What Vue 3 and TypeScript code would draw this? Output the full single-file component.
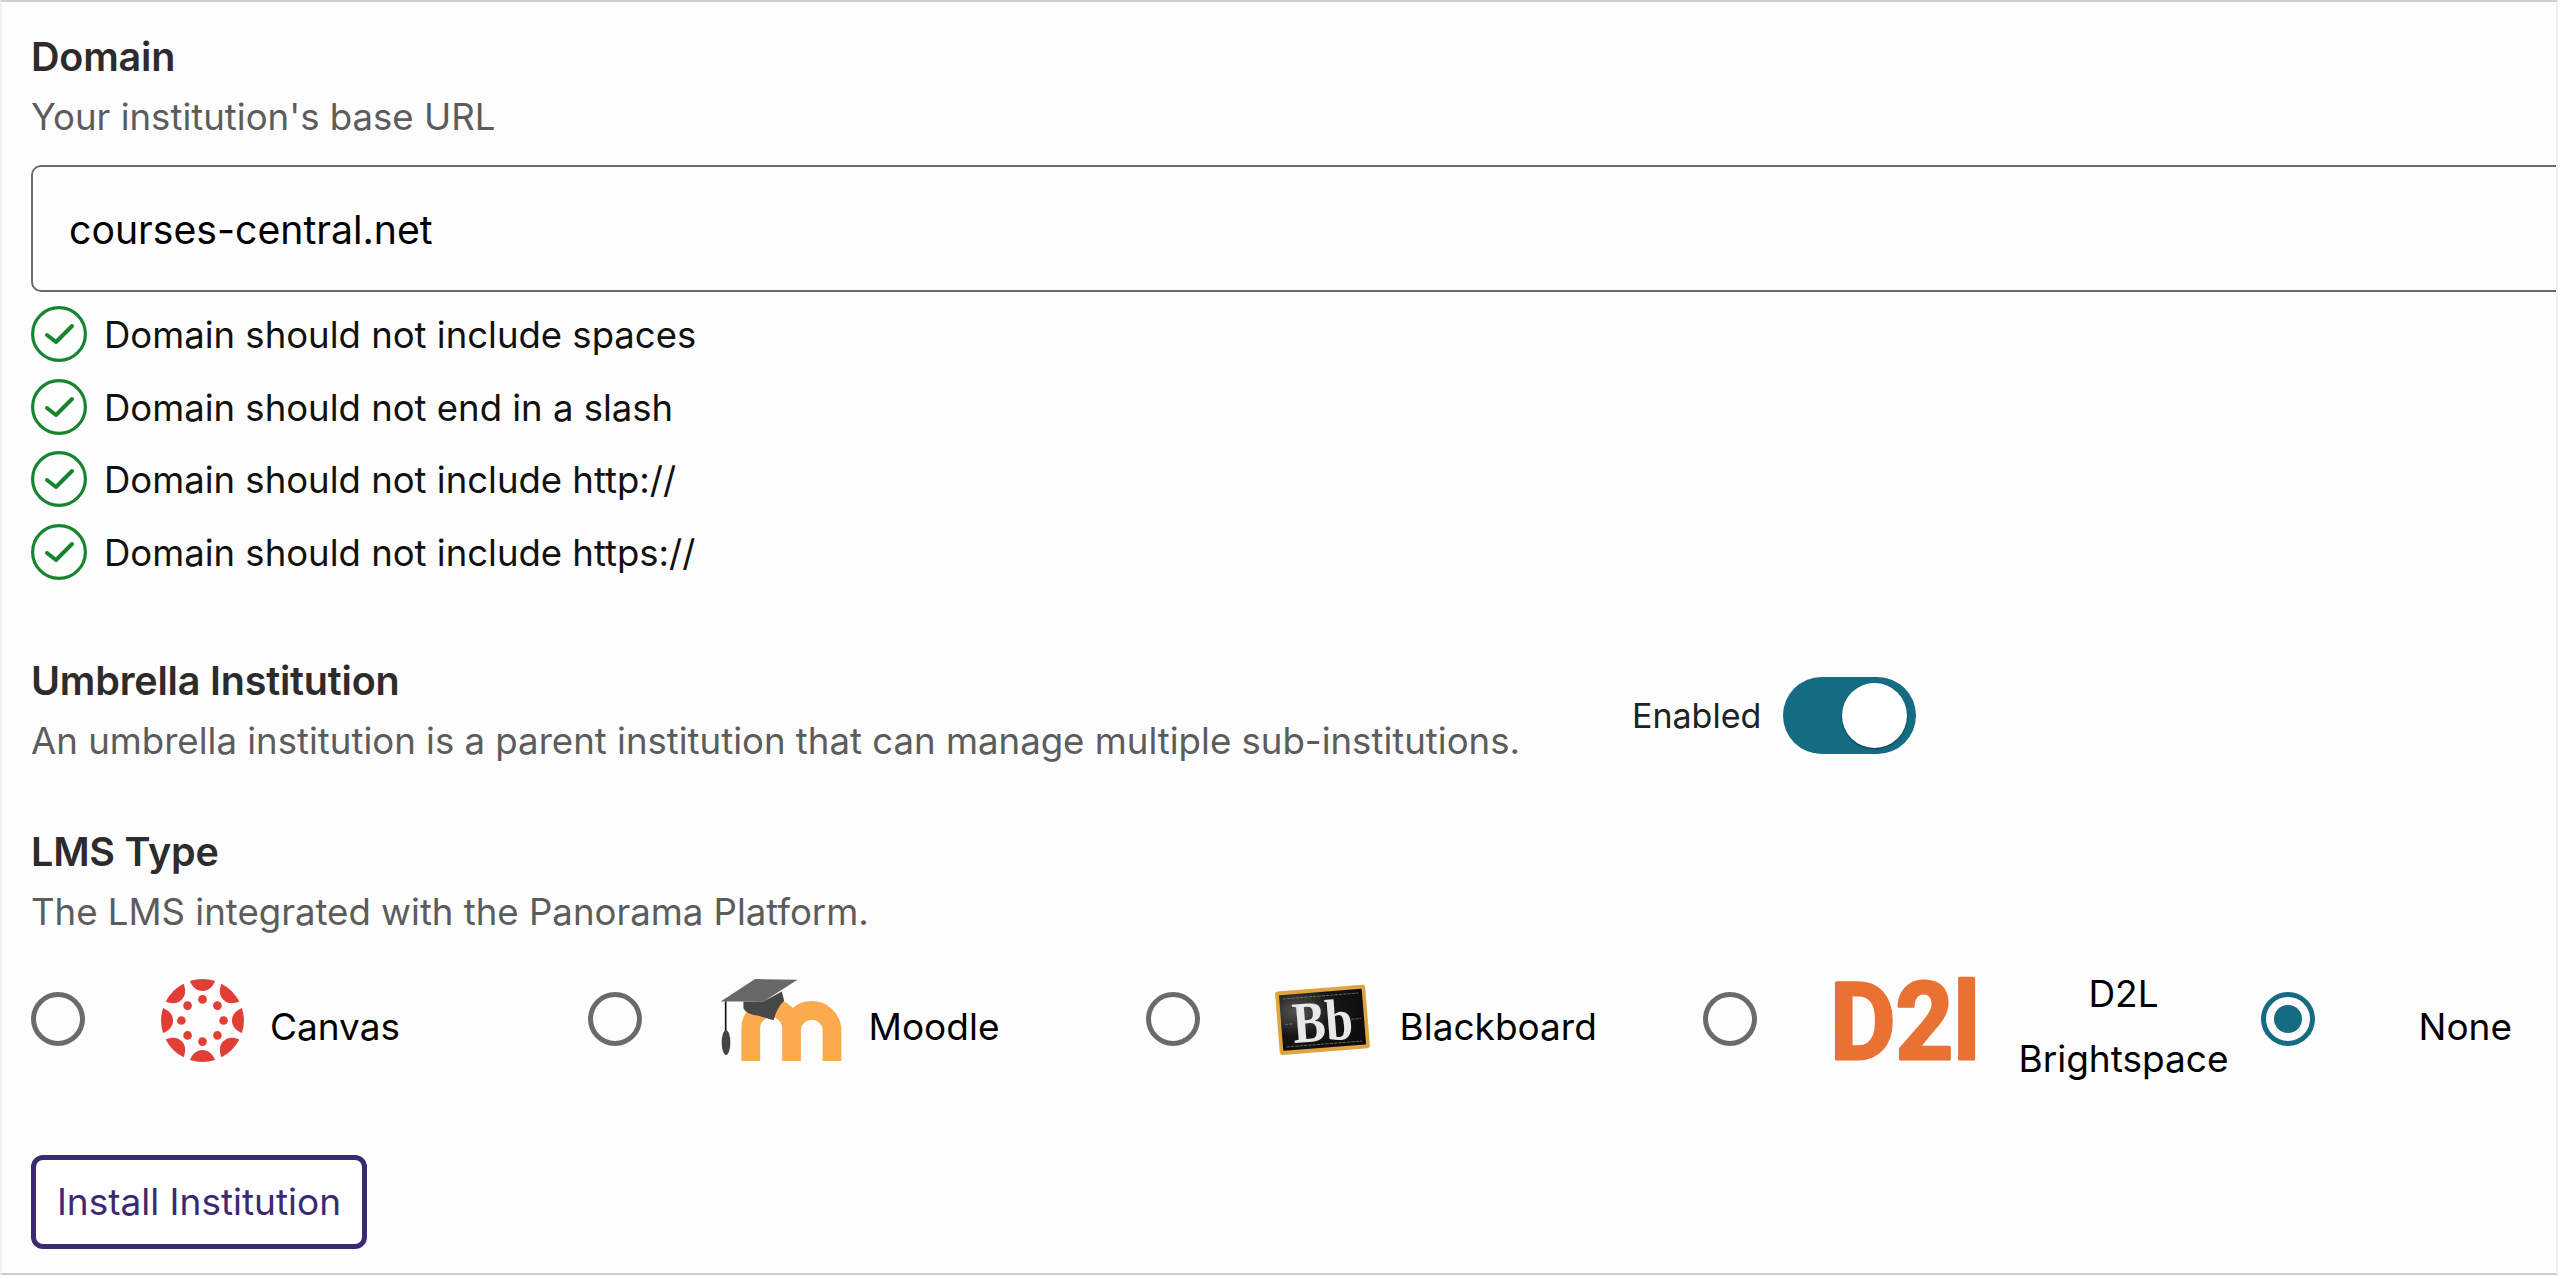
<script setup lang="ts">
const rules: string[] = [
  'Domain should not include spaces',
  'Domain should not end in a slash',
  'Domain should not include http://',
  'Domain should not include https://',
]
const wedges: number[] = [0, 45, 90, 135, 180, 225, 270, 315]
</script>

<template>
  <main class="card">
    <section class="domain">
      <h2 class="title">Domain</h2>
      <p class="desc">Your institution's base URL</p>
      <div class="input">courses-central.net</div>
      <ul class="rules">
        <li v-for="r in rules" :key="r" class="rule">
          <svg class="check" viewBox="0 0 56 56" fill="none">
            <circle cx="28" cy="28" r="26.4" stroke="#178530" stroke-width="3.2" />
            <path d="M16 29 L25 36 L41 20" stroke="#178530" stroke-width="4" stroke-linecap="round" stroke-linejoin="round" />
          </svg>
          <span class="rule-text">{{ r }}</span>
        </li>
      </ul>
    </section>

    <section class="umbrella">
      <div class="umbrella-text">
        <h2 class="title">Umbrella Institution</h2>
        <p class="desc">An umbrella institution is a parent institution that can manage multiple sub-institutions.</p>
      </div>
      <div class="toggle-wrap">
        <span class="toggle-label">Enabled</span>
        <span class="toggle"><span class="knob"></span></span>
      </div>
    </section>

    <section class="lms">
      <h2 class="title">LMS Type</h2>
      <p class="desc">The LMS integrated with the Panorama Platform.</p>
      <div class="options">
        <div class="option opt-canvas">
          <span class="radio"></span>
          <svg class="logo canvas-logo" viewBox="0 0 100 100">
            <g fill="#e13e36">
              <path v-for="a in wedges" :key="a" :transform="`rotate(${a} 50 50)`"
                d="M34.8 2.5 A50 50 0 0 1 65.2 2.5 C62 10 57 14.5 50 14.5 C43 14.5 38 10 34.8 2.5 Z" />
              <circle v-for="a in wedges" :key="'d' + a" :transform="`rotate(${a} 50 50)`" cx="50" cy="24.6" r="5.2" />
            </g>
          </svg>
          <span class="label">Canvas</span>
        </div>

        <div class="option opt-moodle">
          <span class="radio"></span>
          <svg class="logo moodle-logo" viewBox="480 85 365 248">
            <path d="M572 330 V232 A61 61 0 0 1 694 232 V330 M694 232 A61 61 0 0 1 815 232 V330" fill="none" stroke="#fbaa4e" stroke-width="56" />
            <path d="M550 152 L610 152 L665 122 L672 150 Q652 168 640 208 L595 195 Q558 190 550 172 Z" fill="#474747" />
            <path d="M482 152 L585 85 L712 87 L610 152 Z" fill="#686868" />
            <path d="M497 152 V245" stroke="#111" stroke-width="5" />
            <ellipse cx="498" cy="275" rx="13" ry="37" fill="#444" />
          </svg>
          <span class="label">Moodle</span>
        </div>

        <div class="option opt-bb">
          <span class="radio"></span>
          <svg class="logo bb-logo" viewBox="520 97 292 218">
            <defs>
              <radialGradient id="bbg" cx="0.2" cy="0.3" r="0.9">
                <stop offset="0" stop-color="#555" />
                <stop offset="0.5" stop-color="#151515" />
                <stop offset="1" stop-color="#0c0c0c" />
              </radialGradient>
            </defs>
            <g transform="rotate(-4.5 666 207)">
              <rect x="530" y="111" width="272" height="192" rx="8" fill="#dfa440" />
              <rect x="541" y="123" width="250" height="168" rx="3" fill="url(#bbg)" />
              <path d="M552 212 H578 M752 212 H782 M552 280 H780 M552 135 H780" stroke="#999" stroke-width="2.5" stroke-dasharray="10 3" opacity=".7" />
              <text x="666" y="270" class="bb-text" text-anchor="middle" textLength="182" lengthAdjust="spacingAndGlyphs">Bb</text>
            </g>
          </svg>
          <span class="label">Blackboard</span>
        </div>

        <div class="option opt-d2l">
          <span class="radio"></span>
          <svg class="logo d2l-logo" viewBox="0 0 143 81">
            <text x="-5" y="79" class="d2l-text" textLength="150" lengthAdjust="spacingAndGlyphs">D2l</text>
          </svg>
          <span class="label multi">D2L Brightspace</span>
        </div>

        <div class="option opt-none">
          <span class="radio on"><span class="dot"></span></span>
          <span class="label">None</span>
        </div>
      </div>
    </section>

    <button class="install" type="button">Install Institution</button>
  </main>
</template>

<style>
html, body { margin: 0; background: #fff; }
</style>

<style scoped>
.card {
  box-sizing: border-box;
  width: 2558px;
  height: 1275px;
  border-top: 2px solid #cfcfcf;
  border-bottom: 2px solid #cfcfcf;
  border-left: 2px solid #f0f0f0;
  border-right: 2px solid #f0f0f0;
  background: #fdfdfd;
  padding: 32px 0 0 29px;
  font-family: Inter, "Liberation Sans", sans-serif;
  color: #000;
}
.title {
  margin: 0;
  font-size: 39.5px;
  line-height: 46px;
  font-weight: 600;
  color: #2d2b2b;
  letter-spacing: -0.2px;
}
.desc {
  margin: 14px 0 0;
  font-size: 36.6px;
  line-height: 46px;
  color: #5c5c5c;
}
.input {
  box-sizing: border-box;
  display: flex;
  align-items: center;
  height: 127px;
  margin-top: 25px;
  padding-left: 36px;
  padding-top: 2px;
  border: 2.5px solid #6b6b6b;
  border-right: none;
  border-radius: 10px 0 0 10px;
  font-size: 39.2px;
  color: #000;
}
.rules {
  list-style: none;
  margin: 14px 0 0;
  padding: 0;
  display: flex;
  flex-direction: column;
  gap: 16.7px;
}
.rule {
  display: flex;
  align-items: center;
  gap: 17px;
  height: 56px;
  font-size: 36.5px;
  color: #111;
}
.rule-text { padding-top: 2px; }
.check { width: 56px; height: 56px; flex: none; }
.umbrella {
  display: flex;
  margin-top: 78px;
}
.umbrella-text { width: 1601px; flex: none; }
.toggle-wrap {
  display: flex;
  align-items: center;
  gap: 22px;
  height: 77px;
  margin-top: 19px;
}
.toggle-label { font-size: 34px; color: #222; }
.toggle {
  box-sizing: border-box;
  width: 133px;
  height: 77px;
  border-radius: 39px;
  background: #156b82;
  display: flex;
  align-items: center;
  justify-content: flex-end;
  padding-right: 9px;
}
.knob {
  width: 65px;
  height: 65px;
  border-radius: 50%;
  background: #fff;
  box-shadow: 0 1px 2px rgba(0, 0, 30, .5);
}
.lms { margin-top: 65px; }
.options {
  display: flex;
  align-items: center;
  height: 104px;
  margin-top: 40px;
  font-size: 37px;
}
.option {
  display: flex;
  align-items: center;
  flex: none;
  height: 104px;
  position: relative;
}
.radio {
  box-sizing: border-box;
  flex: none;
  width: 54px;
  height: 54px;
  border: 5px solid #6a6a6a;
  border-radius: 50%;
  margin-top: -16px;
  display: flex;
  align-items: center;
  justify-content: center;
}
.radio.on { border-color: #156b82; }
.dot { width: 28px; height: 28px; border-radius: 50%; background: #156b82; }
.logo { flex: none; }
.label { flex: none; margin-top: -2px; }
.opt-canvas { width: 556.5px; }
.opt-moodle { width: 558px; }
.opt-bb { width: 557px; }
.opt-d2l { width: 558px; }
.canvas-logo { width: 83px; height: 83px; margin-left: 76px; margin-right: 26px; margin-top: -14px; }
.moodle-logo { width: 122px; height: 83px; margin-left: 78px; margin-right: 27px; margin-top: -14px; }
.bb-logo { width: 97px; height: 73px; margin-left: 74px; margin-right: 29px; margin-top: -16px; }
.d2l-logo { width: 143px; height: 81px; margin-left: 78px; margin-right: 40px; margin-top: -14px; overflow: visible; }
.opt-none .label { margin-left: 104px; }
.multi { width: 212px; text-align: center; line-height: 65px; }
.bb-text {
  font-family: "Liberation Serif", serif;
  font-size: 176px;
  font-weight: 700;
  fill: #e8e8e8;
}
.d2l-text {
  font-family: Roboto, sans-serif;
  font-size: 108px;
  font-weight: 700;
  fill: #e97132;
  stroke: #e97132;
  stroke-width: 3px;
  stroke-linejoin: round;
}
.install {
  display: block;
  box-sizing: border-box;
  width: 336px;
  height: 94px;
  margin-top: 76px;
  padding: 0 0 2px;
  background: #fff;
  border: 5px solid #3c2a70;
  border-radius: 12px;
  font-family: inherit;
  font-size: 37px;
  color: #3c2a70;
}
</style>
